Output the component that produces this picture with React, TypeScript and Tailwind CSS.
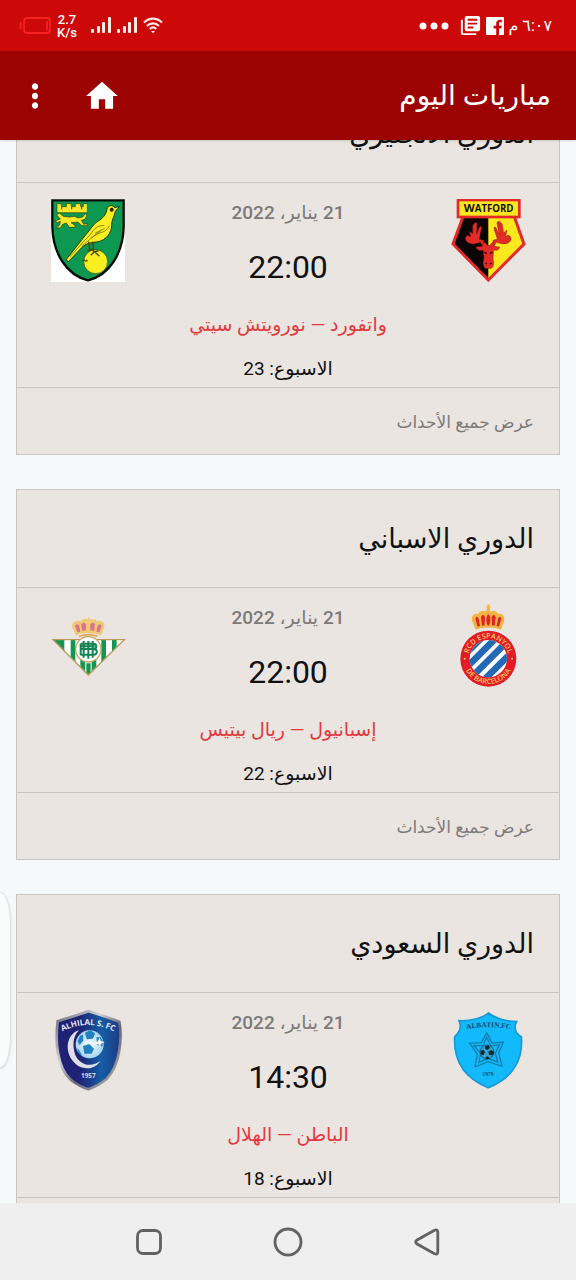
import type { ReactNode } from 'react';
import { MdHome, MdLibraryBooks, MdMoreVert } from 'react-icons/md';

type Match = {
  league: string;
  date: string;
  time: string;
  teams: string;
  week: number;
  home: ReactNode;
  away: ReactNode;
};

const Crest = ({ label, children }: { label: string; children: ReactNode }) => (
  <svg
    role="img"
    aria-label={label}
    viewBox="62 27 225 249"
    className="w-[75px] h-[83px]"
    fontFamily="Open Sans, sans-serif"
  >
    {children}
  </svg>
);

const Watford = () => (
  <Crest label="واتفورد">
    <path d="M98 80 L66 162 L174 272 L282 162 L252 80 Z" fill="#fbe91d" />
    <path d="M98 80 L66 162 L174 272 V80 Z" fill="#0b0605" />
    <path d="M98 80 L68 162 L174 270 L281 162 L252 80" fill="none" stroke="#e22b28" strokeWidth="9" />
    <rect x="83" y="30" width="184" height="51" fill="#fbe622" stroke="#e22b28" strokeWidth="8" />
    <text x="175" y="66" textAnchor="middle" fontSize="29" fontWeight="700" fill="#16130a">
      <tspan fontSize="34">W</tspan>ATFORD
    </text>
    <g fill="#e32a29" stroke="#5e1210" strokeWidth="1">
      <path d="M158 171 L150 157 C138 162 118 166 108 153 C103 147 104 140 110 137 C116 135 118 140 121 141 L117 124 L127 131 L127 108 C131 97 139 94 140 101 L139 132 L147 112 C152 104 157 111 152 121 L147 148 L160 151 Z" />
      <path d="M190 171 L198 157 C210 162 230 166 240 153 C244 147 242 140 237 137 C231 134 228 139 226 141 L230 120 L220 129 L216 104 C211 91 198 93 200 101 L206 131 L196 112 C191 108 190 114 193 123 L201 147 L188 151 Z" />
      <path d="M160 154 L172 166 L178 166 L189 154 L191 169 L208 171 C206 182 195 182 190 180 L188 204 L190 218 C189 237 180 237 175 235 C163 239 160 231 158 219 L161 204 L158 180 C149 184 138 180 137 170 L156 169 Z" />
    </g>
    <path d="M162 186 l7 5 M186 186 l-7 5 M165 219 l5 3 M184 219 l-5 3" stroke="#2a0705" strokeWidth="4" />
  </Crest>
);

const Norwich = () => (
  <Crest label="نورويتش سيتي">
    <rect x="61" y="28" width="223" height="248" fill="#fff" />
    <path
      d="M66 31 H280 V110 C278 190 238 255 173 271 C108 255 68 190 66 110 Z"
      fill="#0d9851"
      stroke="#080d08"
      strokeWidth="7"
    />
    <path
      d="M80 41 h13 v9 h15 v-9 h15 v9 h12 v-9 h16 v9 h8 v-9 h12 v27 H80 Z"
      fill="#f5e829"
      stroke="#334811"
      strokeWidth="2"
    />
    <path d="M94 51 v7 M124 51 v7 M154 51 v7" stroke="#3b3509" strokeWidth="3" />
    <path
      d="M78 74 L88 70 L99 79 L117 81 L132 79 L143 84 L157 81 L165 71 L170 75 L164 88 L153 91 L160 103 L171 101 V107 H155 L142 96 L122 98 L134 106 V112 H117 L108 99 L97 103 L90 114 H78 L88 105 L90 94 L79 99 L76 92 L90 87 Z"
      fill="#f5e829"
      stroke="#273a0d"
      strokeWidth="2"
    />
    <circle cx="196" cy="215" r="36" fill="#f9ef20" stroke="#143d18" strokeWidth="2" />
    <path d="M155 212 h18 M161 208 l5 8 M169 208 v8" stroke="#3b3f0a" strokeWidth="2" />
    <path
      d="M268 49 L253 53 C248 44 233 45 230 57 C228 74 216 86 202 94 C188 103 181 118 165 136 L108 208 L113 216 L155 172 C171 157 187 158 204 155 C228 150 244 128 244 106 C243 91 252 80 255 64 Z"
      fill="#faed22"
      stroke="#283b0a"
      strokeWidth="3"
    />
    <path
      d="M222 107 C204 104 188 119 181 133 L151 163 M237 107 C229 128 208 126 192 137 L154 169 M223 115 L194 130 M211 123 L183 144 M118 201 L157 158"
      fill="none"
      stroke="#59580e"
      strokeWidth="2"
    />
    <circle cx="244" cy="59" r="6" fill="#272506" />
    <path d="M175 155 L179 181 M187 155 L190 187 M171 182 L184 178 L207 198 M181 196 L193 185 L204 183" fill="none" stroke="#534307" strokeWidth="4" />
  </Crest>
);

const Espanyol = () => (
  <Crest label="إسبانيول">
    <defs>
      <clipPath id="espanyol-field">
        <circle cx="174" cy="191" r="56" />
      </clipPath>
      <path id="espanyol-top" d="M113 191 A61 61 0 0 1 235 191" />
      <path id="espanyol-bottom" d="M98 191 A76 76 0 0 0 250 191" />
    </defs>
    <circle cx="174" cy="191" r="84" fill="#e21b26" />
    <g clipPath="url(#espanyol-field)">
      <rect x="116" y="133" width="116" height="116" fill="#fff" />
      <path
        d="M92 190 L184 98 M96 230 L212 114 M112 258 L242 128 M140 276 L250 166"
        stroke="#2369b5"
        strokeWidth="20"
      />
    </g>
    <g fontSize="22" fontWeight="600" fill="#f7c760" textAnchor="middle">
      <text>
        <textPath href="#espanyol-top" startOffset="50%">RCD ESPANYOL</textPath>
      </text>
      <text>
        <textPath href="#espanyol-bottom" startOffset="50%">DE BARCELONA</textPath>
      </text>
    </g>
    <circle cx="103" cy="191" r="3" fill="#f7c760" />
    <circle cx="245" cy="191" r="3" fill="#f7c760" />
    <path
      d="M136 104 L125 77 C122 63 131 53 143 57 C149 47 161 45 168 50 L170 40 L166 36 L171 34 V28 H177 V34 L182 36 L178 40 L180 50 C188 45 199 48 204 57 C217 53 225 65 221 79 L212 104 C190 95 158 95 136 104 Z"
      fill="#f2b544"
    />
    <g fill="#e02424">
      <path d="M135 71 q4 -11 10 0 l4 22 -7 2 Z" />
      <path d="M152 67 q6 -16 12 0 l-1 24 -8 1 Z" />
      <ellipse cx="174" cy="75" rx="6" ry="17" />
      <path d="M184 67 q6 -16 12 0 l-3 25 -8 -1 Z" />
      <path d="M203 71 q6 -11 10 0 l-7 24 -7 -2 Z" />
    </g>
  </Crest>
);

const Betis = () => (
  <Crest label="ريال بيتيس">
    <defs>
      <clipPath id="betis-field">
        <path d="M68 134 H282 L174 240 Z" />
      </clipPath>
    </defs>
    <path d="M68 134 H282 L174 240 Z" fill="#fff" />
    <g clipPath="url(#betis-field)" fill="#149653">
      <path d="M68 132h34v110H68zM121 132h14v110h-14zM150 132h14v110h-14zM184 132h14v110h-14zM213 132h14v110h-14zM245 132h14v110h-14zM168 205h13v40h-13z" />
    </g>
    <path d="M68 134 H282 L174 240 Z" fill="none" stroke="#b99a58" strokeWidth="4" />
    <circle cx="174" cy="163" r="38" fill="#fff" stroke="#c3a461" strokeWidth="4" />
    <g fill="none" stroke="#138354" strokeWidth="6">
      <path d="M151 146 H189 C201 146 201 162 189 162 H151 M151 179 H190 C203 179 203 162 189 162 M160 138 V188 M174 138 V191 M187 138 V188 M151 146 V181 M151 154 H193" />
    </g>
    <path
      d="M137 121 L126 98 C122 83 137 73 150 79 C156 72 164 70 171 74 L174 65 L180 74 C188 70 195 73 200 79 C214 73 226 84 221 99 L212 121 C188 112 160 112 137 121 Z"
      fill="#efc973"
    />
    <g fill="#dc7192">
      <path d="M134 92 q7 -9 13 0 l3 18 -9 2 Z" />
      <path d="M153 88 q7 -9 14 0 v18 l-11 2 Z" />
      <path d="M180 88 q8 -9 14 0 l-3 20 -11 -2 Z" />
      <path d="M202 92 q7 -9 12 0 l-7 20 -9 -2 Z" />
    </g>
    <path d="M146 124 Q174 114 202 124" fill="none" stroke="#e2a95d" strokeWidth="5" />
  </Crest>
);

const AlBatin = () => (
  <Crest label="الباطن">
    <path
      d="M174 39 C160 52 123 64 86 62 C94 79 92 93 73 110 C70 170 91 231 174 263 C256 231 278 170 273 110 C254 101 250 81 259 65 C226 65 190 52 174 39 Z"
      fill="#12b9fb"
      stroke="#1698d6"
      strokeWidth="5"
    />
    <path id="albatin-arc" d="M108 88 Q174 75 242 88" fill="none" />
    <text fontFamily="Liberation Serif, serif" fontSize="22" fontWeight="700" fill="#154a70" textAnchor="middle">
      <textPath href="#albatin-arc" startOffset="50%">ALBATIN.FC</textPath>
    </text>
    <g fill="none" stroke="#177cae" strokeWidth="4">
      <path d="M169 98 L185 129 L219 127 L205 159 L215 199 L173 185 L134 201 L141 162 L118 130 L153 128 Z" />
      <path d="M169 111 L181 137 L207 135 L195 160 L202 186 L172 175 L146 187 L151 160 L131 137 L158 137 Z" />
    </g>
    <circle cx="170" cy="156" r="21" fill="#32a5cf" stroke="#123a4c" strokeWidth="2" />
    <path d="M164 139 l11 -3 4 8 -8 6 -7 -4Z M151 152 l8 -3 5 8 -5 9 -8 -3Z M174 155 l9 -5 8 6 -4 10 -11 -1Z M165 172 l8 -3 5 7 -9 2Z" fill="#0b2836" />
    <text x="173" y="227" fontFamily="Liberation Serif, serif" fontSize="17" fontWeight="700" fill="#154a70" textAnchor="middle">
      1979
    </text>
  </Crest>
);

const AlHilal = () => (
  <Crest label="الهلال">
    <defs>
      <linearGradient id="hilal-field" x1="0" x2="1">
        <stop offset=".35" stopColor="#1f2174" />
        <stop offset=".7" stopColor="#155da5" />
        <stop offset="1" stopColor="#1c3a82" />
      </linearGradient>
      <linearGradient id="hilal-rim" x1="0" x2="1" y2="1">
        <stop offset="0" stopColor="#686a76" />
        <stop offset=".35" stopColor="#d2d1d5" />
        <stop offset=".6" stopColor="#686875" />
        <stop offset="1" stopColor="#bbbac3" />
      </linearGradient>
      <radialGradient id="hilal-ball">
        <stop offset="0" stopColor="#fff" />
        <stop offset="1" stopColor="#a5d3ed" />
      </radialGradient>
    </defs>
    <path
      d="M174 34 C146 44 112 53 82 64 C75 118 78 203 122 240 Q149 260 174 268 Q204 257 229 237 C269 196 276 116 267 65 C236 53 205 43 174 34 Z"
      fill="url(#hilal-field)"
      stroke="url(#hilal-rim)"
      strokeWidth="8"
    />
    <path d="M146 91 C110 101 101 151 128 184 C149 211 191 213 211 182 C180 207 140 192 132 155 C126 126 131 106 146 91 Z" fill="#dedfe9" />
    <circle cx="178" cy="133" r="42" fill="url(#hilal-ball)" />
    <g fill="#2282bf">
      <path d="M164 98 L180 91 L194 100 L188 116 L169 118 Z" />
      <path d="M142 124 L149 107 L158 104 L159 121 L148 136 Z" />
      <path d="M158 138 L177 132 L191 146 L184 161 L162 161 Z" />
      <path d="M198 112 L211 111 L219 126 L215 140 L201 134 Z" />
      <path d="M146 149 L156 169 L146 162 L140 145 Z" />
    </g>
    <path d="M208 112 l3 11 12 3 -11 5 -3 11 -5 -10 -12 -1 11 -7 Z" fill="#fff" />
    <path id="hilal-arc" d="M92 96 Q174 54 254 96" fill="none" />
    <text fontFamily="Open Sans, sans-serif" fontSize="24" fontWeight="700" fill="#e5e7f2" textAnchor="middle">
      <textPath href="#hilal-arc" startOffset="50%">ALHILAL S. FC</textPath>
    </text>
    <text x="174" y="234" fontSize="19" fontWeight="700" fill="#d7d8e8" textAnchor="middle">
      1957
    </text>
  </Crest>
);

const matches: Match[] = [
  {
    league: 'الدوري الانجليزي',
    date: '21 يناير، 2022',
    time: '22:00',
    teams: 'واتفورد — نورويتش سيتي',
    week: 23,
    home: <Watford />,
    away: <Norwich />,
  },
  {
    league: 'الدوري الاسباني',
    date: '21 يناير، 2022',
    time: '22:00',
    teams: 'إسبانيول — ريال بيتيس',
    week: 22,
    home: <Espanyol />,
    away: <Betis />,
  },
  {
    league: 'الدوري السعودي',
    date: '21 يناير، 2022',
    time: '14:30',
    teams: 'الباطن — الهلال',
    week: 18,
    home: <AlBatin />,
    away: <AlHilal />,
  },
];

const Signal = () => (
  <svg viewBox="0 0 20 17" className="w-5 h-[17px]" fill="#ffe9e4">
    <rect x="0" y="12" width="3" height="4" rx="1" />
    <rect x="6" y="9" width="3" height="7" rx="1" />
    <rect x="11" y="5" width="3" height="11" rx="1" />
    <rect x="17" y="0" width="3" height="16" rx="1" />
  </svg>
);

const StatusBar = () => (
  <div dir="ltr" className="flex h-[51px] shrink-0 items-center justify-between bg-[#cc0808] pl-[19px] pr-6 text-white">
    <div className="flex items-center">
      <svg viewBox="0 0 32 17" className="w-8 h-[17px]" fill="none" stroke="#f72222" strokeWidth="1.8">
        <rect x="5" y="1" width="26" height="15" rx="3" />
        <path d="M28 4v9M1.5 5v7" />
      </svg>
      <div className="ml-1 flex w-6 flex-col items-center text-[13px] font-medium leading-[13px]">
        <span>2.7</span>
        <span>K/s</span>
      </div>
      <div className="ml-3 flex items-center gap-1.5">
        <Signal />
        <Signal />
        <svg viewBox="0 0 20 17" className="w-5 h-[17px]" fill="none" stroke="#ffe9e4" strokeWidth="2.2">
          <path d="M1 5.5C6 .3 14 .3 19 5.5M4 9c3.400-3.600 8.600-3.600 12 0M6.800 12c1.900-1.900 4.500-1.900 6.400 0" />
          <path d="M8 14h4l-2 2.500z" fill="#ffe9e4" stroke="none" />
        </svg>
      </div>
    </div>
    <div className="flex items-center">
      <svg viewBox="0 0 30 8" className="w-[30px] h-2" fill="#fff">
        <circle cx="4" cy="4" r="3.500" />
        <circle cx="15" cy="4" r="3.500" />
        <circle cx="26" cy="4" r="3.500" />
      </svg>
      <MdLibraryBooks className="ml-2.5 size-[23px]" />
      <svg viewBox="0 0 18 18" className="ml-1 size-[18px]">
        <rect width="18" height="18" rx="1" fill="#fff" />
        <path d="M10.200 18v-6.500H7.600V8.700h2.600V6.500c0-2.500 1.500-3.800 3.700-3.800h1.900v2.600h-1.400c-1.100 0-1.400.5-1.400 1.400v2h2.800l-.4 2.800h-2.400V18z" fill="#c80808" />
      </svg>
      <span dir="rtl" className="ml-1 text-base leading-6">
        ٦:٠٧ م
      </span>
    </div>
  </div>
);

const AppBar = () => (
  <header className="relative z-10 flex h-[89px] shrink-0 items-center justify-between bg-[#9c0303] pl-4 pr-[25px] text-white shadow-sm">
    <h1 className="text-[28px] leading-10">مباريات اليوم</h1>
    <div dir="ltr" className="flex items-center gap-[29px]">
      <button type="button" aria-label="المزيد">
        <MdMoreVert className="size-[38px]" />
      </button>
      <button type="button" aria-label="الرئيسية">
        <MdHome className="size-[38px]" />
      </button>
    </div>
  </header>
);

const MatchCard = ({ match }: { match: Match }) => (
  <article className="border border-[#cbc5c0] bg-[#eae5e1] text-[#111]">
    <div className="border-b border-[#cbc5c0] px-[25px] pt-[25px] pb-[23px]">
      <h2 className="text-[27px] leading-[49px]">{match.league}</h2>
    </div>
    <div className="flex border-b border-[#cbc5c0] pt-4 pb-1">
      <div className="flex w-[142px] justify-center">{match.home}</div>
      <div className="flex flex-1 flex-col items-center whitespace-nowrap">
        <p className="text-[19px] font-medium leading-7 text-[#7d7a78]">{match.date}</p>
        <p className="mt-5 text-[32px] leading-10">{match.time}</p>
        <p className="mt-6 text-[19px] leading-7 text-[#e2393d]">{match.teams}</p>
        <p className="mt-4 text-[19px] leading-7">الاسبوع: {match.week}</p>
      </div>
      <div className="flex w-[142px] justify-center">{match.away}</div>
    </div>
    <div className="px-[25px] pt-5 pb-[18px]">
      <a href="#events" className="block text-[17px] leading-7 text-[#7d7a78]">
        عرض جميع الأحداث
      </a>
    </div>
  </article>
);

const NavBar = () => (
  <nav dir="ltr" className="flex h-[77px] shrink-0 items-center justify-center gap-[91px] bg-[#efefef]">
    <button type="button" aria-label="التطبيقات الأخيرة" className="flex size-12 items-center justify-center">
      <svg viewBox="0 0 30 30" className="size-[30px]" fill="none" stroke="#626262" strokeWidth="2.8">
        <rect x="3.500" y="3.500" width="23" height="23" rx="5.500" />
      </svg>
    </button>
    <button type="button" aria-label="الشاشة الرئيسية" className="flex size-12 items-center justify-center">
      <svg viewBox="0 0 30 30" className="size-[30px]" fill="none" stroke="#626262" strokeWidth="2.800">
        <circle cx="15" cy="15" r="13" />
      </svg>
    </button>
    <button type="button" aria-label="رجوع" className="flex size-12 items-center justify-center">
      <svg viewBox="0 0 30 30" className="size-[30px]" fill="none" stroke="#626262" strokeWidth="2.800">
        <path d="M22.500 3.200 L4.700 13.200 Q2.700 15 4.700 16.800 L22.500 26.800 Q25.800 28 25.800 24.500 V5.500 Q25.800 2 22.500 3.200 Z" />
      </svg>
    </button>
  </nav>
);

const App = () => {
  return (
    <div
      dir="rtl"
      lang="ar"
      className="relative flex h-screen flex-col overflow-hidden bg-[#f5f9fa] font-[Roboto,'DejaVu_Sans',sans-serif]"
    >
      <StatusBar />
      <AppBar />

      <main className="min-h-0 flex-1 overflow-hidden">
        {/* List is scrolled part of the way down the first card */}
        <div className="-mt-14 flex flex-col gap-[34px] px-4">
          {matches.map((match) => (
            <MatchCard key={match.league} match={match} />
          ))}
        </div>
      </main>

      {/* Edge panel handle */}
      <div className="absolute top-[892px] left-0 h-[176px] w-[11px] rounded-r-[11px_32px] border border-l-0 border-[#dfe2e3] bg-[#fafcfc] shadow-sm" />

      <NavBar />
    </div>
  );
};

export default App;
